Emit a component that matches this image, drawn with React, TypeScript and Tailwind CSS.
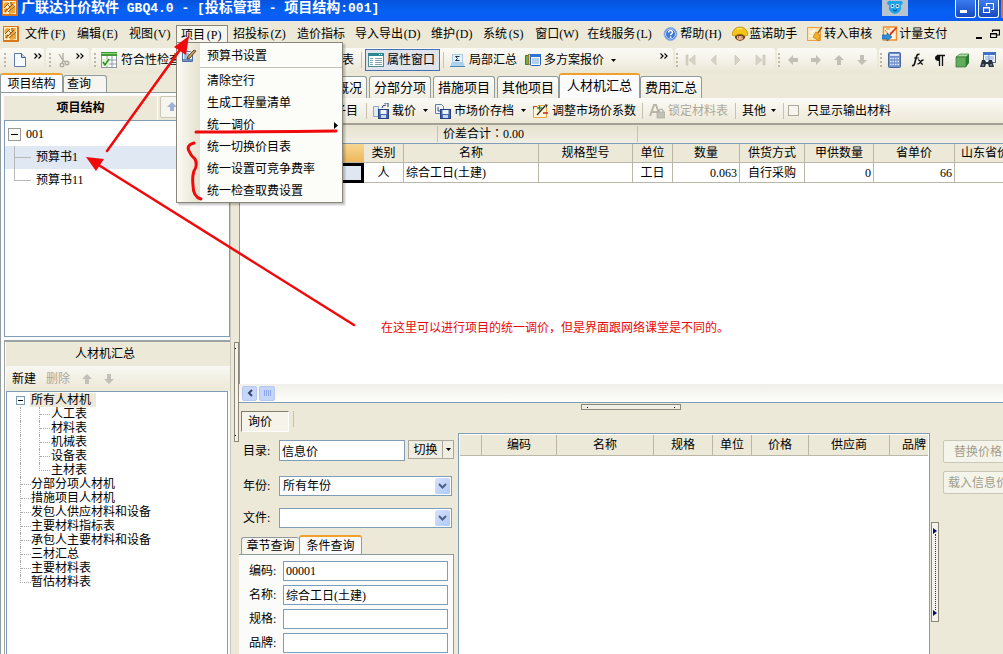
import React from "react";

type Kids = { children?: React.ReactNode };

function Key({ k }: { k: string }) {
  return <span className="inline-block w-[18px] text-center">({k})</span>;
}

function AppLogo() {
  return (
    <svg width="16" height="16" viewBox="0 0 16 16" className="shrink-0">
      <rect width="16" height="16" rx="1" fill="#d9771c" />
      <rect x="1" y="1" width="13" height="13" fill="#fff0c8" />
      <path d="M1.500 7Q1 2 5 2l2 1-4 4zM8 2h5l-1 4-4 4-2-2 3-3zM2 9l3-1 1 2-2 3-2-1zM7 11l6-5v7l-6 1z" fill="#f0a63c" />
      <path d="M2 8l5-5M5 10l6-6M6 5l2 2M6 12l7-6M3 12l2-3M9 2v3" stroke="#8a4a10" strokeWidth=".9" fill="none" />
    </svg>
  );
}

function HelpIcon() {
  return (
    <svg width="16" height="16" viewBox="0 0 16 16" className="shrink-0">
      <circle cx="7.500" cy="8" r="6.500" fill="#3f78d8" stroke="#9db7e6" />
      <circle cx="7.500" cy="8" r="5" fill="none" stroke="#e6effc" strokeWidth=".8" />
      <path d="M5.600 6.400c0-2.600 4-2.400 3.900-.1 0 1.400-1.900 1.500-1.900 3M7.600 10.600v1.300" fill="none" stroke="#fff" strokeWidth="1.500" />
    </svg>
  );
}

function HelmetIcon() {
  return (
    <svg width="16" height="16" viewBox="0 0 16 16" className="shrink-0">
      <path d="M3 8h10v4q-2 3-5 3t-5-3z" fill="#7a3f1d" />
      <path d="M5 10h6v3q-3 2-6 0z" fill="#e8b68a" />
      <path d="M0 9Q1 1 8 1t8 8l-3 1Q8 6 3 10z" fill="#f5c518" stroke="#b98508" strokeWidth=".7" />
      <path d="M5 3q3-1 5 0" stroke="#fff3a8" fill="none" />
      <path d="M6 11h1M9.500 11h1" stroke="#222" />
    </svg>
  );
}

function AuditIcon() {
  return (
    <svg width="16" height="16" viewBox="0 0 16 16" className="shrink-0">
      <rect x=".5" y="1.500" width="13" height="13" fill="#ffe3ae" stroke="#eda04a" />
      <path d="M3 5l2 2 3-4M2 10h4" stroke="#fff" strokeWidth="1.500" fill="none" />
      <path d="M15 1l-4 6" stroke="#9a5f16" strokeWidth="1.500" />
      <path d="M9 6l4 3-1 6-6-4z" fill="#f2b02a" stroke="#a8690c" strokeWidth=".6" />
    </svg>
  );
}

function PayIcon() {
  return (
    <svg width="16" height="16" viewBox="0 0 16 16" className="shrink-0">
      <rect x="1.500" y="1" width="13" height="13" fill="#fff3d9" stroke="#eb8f2e" strokeWidth="1.500" />
      <path d="M3 4l3 4M4 3h4" stroke="#e48324" />
      <path d="M15 2l-6 7-2 1 1-3 6-6z" fill="#d4301f" />
      <path d="M0 9h5V7l5 4-5 4v-2H0z" fill="#2f8fdb" stroke="#125a9c" strokeWidth=".6" />
    </svg>
  );
}

function Mascot() {
  return (
    <svg width="26" height="16" viewBox="0 0 26 16" className="shrink-0">
      <rect width="26" height="16" fill="#b9c3cf" />
      <path d="M5 3q1-3 4-2h8q3-1 4 2-1 2-2 2 1 8-6 9-7-1-6-9-2 0-2-2z" fill="#1fa3e8" />
      <ellipse cx="10.500" cy="6" rx="2" ry="2" fill="#eafaff" />
      <ellipse cx="15.500" cy="6" rx="2" ry="2" fill="#eafaff" />
      <circle cx="10.500" cy="6" r="1.100" fill="#0a3f78" />
      <circle cx="15.500" cy="6" r="1.100" fill="#0a3f78" />
      <path d="M11 10q2 2 4 0" stroke="#0a3f78" fill="none" />
    </svg>
  );
}

function DocIcon() {
  return (
    <svg width="12" height="16" viewBox="0 0 12 16" className="shrink-0">
      <path d="M.5 1.500h7l4 4v9H.5z" fill="#f7faff" stroke="#5d7ba6" />
      <path d="M7.500 1.500v4h4" fill="#c4d6f0" stroke="#3a5a8c" />
    </svg>
  );
}

function ScissorsIcon() {
  return (
    <svg width="13" height="16" viewBox="0 0 13 16" className="shrink-0" fill="none" stroke="#b1afa4" strokeWidth="1.400">
      <path d="M2 2l5 8M6 1l0 8" />
      <circle cx="5" cy="13" r="1.800" />
      <circle cx="10" cy="11" r="1.800" />
      <path d="M6 9l3 1M6 9l-1 2" />
    </svg>
  );
}

function CheckGridIcon() {
  return (
    <svg width="16" height="16" viewBox="0 0 16 16" className="shrink-0">
      <rect x=".5" y=".5" width="15" height="15" fill="#fff" stroke="#8d99a0" />
      <rect width="16" height="4" fill="#3f9a35" />
      <rect y="1" width="16" height="1" fill="#8ed07e" />
      <path d="M0 8h16M0 12h16M6 4v12M11 4v12" stroke="#8d99a0" />
      <rect x="1" y="7" width="7" height="7" fill="#dff2d4" />
      <path d="M2 10l2 3 4-6" stroke="#2d8c1f" strokeWidth="1.500" fill="none" />
    </svg>
  );
}

function PropsIcon() {
  return (
    <svg width="16" height="16" viewBox="0 0 16 16" className="shrink-0">
      <rect x=".5" y="1.500" width="15" height="13" fill="#fff" stroke="#4d8c97" />
      <rect y="1" width="16" height="3" fill="#2c8694" />
      <path d="M11 2.500h1M13 2.500h1" stroke="#fff" />
      <path d="M2 6.500h3M2 8.500h3M2 10.500h3M2 12.500h3M7 6.500h7M7 8.500h7M7 10.500h7M7 12.500h7" stroke="#86a6ad" />
    </svg>
  );
}

function SumIcon() {
  return (
    <svg width="15" height="15" viewBox="0 0 15 15" className="shrink-0">
      <rect x="2.500" y="1.500" width="10" height="8" fill="#e4f1fb" stroke="#a9cbe4" />
      <path d="M9.500 3.500h-4l2 2-2 2h4" fill="none" stroke="#1e2f4c" />
      <path d="M1 10h13v3H1z" fill="#a9d3ee" />
      <path d="M0 13.500h15" stroke="#4a88b8" />
    </svg>
  );
}

function PlanIcon() {
  return (
    <svg width="16" height="16" viewBox="0 0 16 16" className="shrink-0">
      <path d="M.5 3.500h4v9h-4z" fill="#6db04f" stroke="#3f7b2a" />
      <path d="M3.500 2.500h4v10h-4z" fill="#e8cf6a" stroke="#9a7d25" />
      <rect x="5.500" y="2.500" width="10" height="11" rx="1" fill="#f3f8ff" stroke="#2663b8" />
      <rect x="5" y="2" width="11" height="3" fill="#2e74cf" />
      <path d="M7 7h7M7 9h7M7 11h7" stroke="#79a4dc" />
    </svg>
  );
}

function DiskIcon({ swap }: { swap?: boolean }) {
  return (
    <svg width="16" height="16" viewBox="0 0 16 16" className="shrink-0">
      {swap ? (
        <>
          <path d="M.5 1.500h6l2 2v7h-8z" fill="#eef3fc" stroke="#5f7fb3" />
          <path d="M3 4v4h4M5 6l2 2-2 2" stroke="#24508f" fill="none" />
        </>
      ) : (
        <>
          <path d="M.5 3.500h5v10h-5z" fill="#e4ebf7" stroke="#8fa5c8" />
          <path d="M9 5q0-3 4-3M11 0h4v4" stroke="#1f3e78" fill="none" />
        </>
      )}
      <rect x="5.500" y="6.500" width="10" height="9" fill="#4567ad" stroke="#263f7d" />
      <rect x="7.500" y="7" width="6" height="4" fill="#eef3fc" />
      <rect x="8" y="12" width="5" height="3" fill="#c9d5ec" />
    </svg>
  );
}

function AdjustIcon() {
  return (
    <svg width="16" height="16" viewBox="0 0 16 16" className="shrink-0">
      <path d="M.5 3.500h4l1-1h8v12H.5z" fill="#fff6da" stroke="#e5a848" />
      <path d="M.5 6V3.500H4" stroke="#c23a1c" fill="none" />
      <path d="M4 12l8-9" stroke="#2a2a2a" strokeWidth="1.300" />
      <path d="M4 5h5M6.500 2.500v5" stroke="#2f8a3c" strokeWidth="1.300" />
      <path d="M10 10h5" stroke="#c2261c" strokeWidth="1.500" />
      <path d="M12 1l3 1-2 3z" fill="#3d3d3d" />
    </svg>
  );
}

function LockIcon() {
  return (
    <svg width="16" height="16" viewBox="0 0 16 16" className="shrink-0">
      <path d="M1 13L5 2h2l4 11M3 9h6" fill="none" stroke="#b7b5a6" strokeWidth="2" />
      <rect x="8" y="9" width="8" height="6" fill="#c4c2b4" stroke="#a5a394" strokeWidth=".6" />
      <path d="M10 9V7q2-2 4 0v2" fill="none" stroke="#a5a394" />
    </svg>
  );
}

function EditIcon() {
  return (
    <svg width="16" height="16" viewBox="0 0 16 16" className="shrink-0">
      <path d="M1.500 3.500h8l2 2v8h-10z" fill="#eef4fc" stroke="#4c6ea4" />
      <path d="M3 6h5M3 8h4M3 10h6" stroke="#5b8bb8" />
      <rect x="2" y="11" width="9" height="2" fill="#6b8dc0" />
      <path d="M6 11l1-3 6-6 2 1-6 7z" fill="#c49a55" stroke="#4f3312" strokeWidth=".8" />
    </svg>
  );
}

function CalcIcon() {
  return (
    <svg width="13" height="16" viewBox="0 0 13 16" className="shrink-0">
      <rect x=".5" y=".5" width="12" height="15" rx="1" fill="#6f90cc" stroke="#4a66a3" />
      <rect x="2" y="2" width="9" height="2" fill="#d7e4f8" />
      <path d="M2 6.500h9M2 9.500h9M2 12.500h9" stroke="#eaf1fc" strokeWidth="1.500" strokeDasharray="1.500 1" />
    </svg>
  );
}

function FxIcon() {
  return (
    <svg width="13" height="14" viewBox="0 0 13 14" className="shrink-0" fill="none" stroke="#111">
      <path d="M8.500 1.500q-2-1-3 2L3.500 11q-.5 2-2.500 1.500" strokeWidth="1.600" />
      <path d="M3 5h5" />
      <path d="M7 7q1.500-.5 2.500 2t2.500 2M12.500 7q-2 0-3 2t-3 2" strokeWidth="1.300" />
    </svg>
  );
}

function PilcrowIcon() {
  return (
    <svg width="11" height="13" viewBox="0 0 11 13" className="shrink-0">
      <path d="M5 1v6Q1 7 1 4t4-3z" fill="#111" />
      <path d="M3 1.500h8M5.500 1v11M8.500 1v11" stroke="#111" strokeWidth="1.300" />
    </svg>
  );
}

function CubeIcon() {
  return (
    <svg width="15" height="15" viewBox="0 0 15 15" className="shrink-0">
      <path d="M1 4l4-3h9l-3 3z" fill="#a9dba2" stroke="#3f7f3d" strokeWidth=".7" />
      <path d="M1 4h10v10H1z" fill="#62ad5d" stroke="#2f6e2e" strokeWidth=".7" />
      <path d="M11 4l3-3v9l-3 4z" fill="#2f7a33" />
    </svg>
  );
}

function FindIcon() {
  return (
    <svg width="16" height="16" viewBox="0 0 16 16" className="shrink-0">
      <rect x="3.500" y=".5" width="12" height="10" fill="#eef5ff" stroke="#3f6cb0" />
      <rect x="3" width="13" height="3" fill="#3f73c4" />
      <path d="M5 5h9M5 7h9M9 3v6" stroke="#86a8d8" />
      <path d="M2 8h3l1 2h2l1-2h3l2 7H9l-1-3H6l-1 3H0z" fill="#2b3340" />
      <path d="M2 13h2M10 13h2" stroke="#9fb4d2" />
    </svg>
  );
}

function NavIcon({ d }: { d: string }) {
  return (
    <svg width="12" height="12" viewBox="0 0 12 12" className="shrink-0">
      <path d={d} fill="#d6d3c6" stroke="#c6c3b4" strokeWidth=".6" />
    </svg>
  );
}

function Arrow({ turn }: { turn: number }) {
  return (
    <svg width="12" height="12" viewBox="0 0 12 12" className="shrink-0">
      <path d="M1 6l5-5v3h5v4H6v3z" fill="#c2c0b6" transform={`rotate(${turn} 6 6)`} />
    </svg>
  );
}

function Caret() {
  return (
    <svg width="5" height="3" viewBox="0 0 5 3" className="shrink-0">
      <path d="M0 0h5L2.500 3z" fill="#000" />
    </svg>
  );
}

function Chevrons() {
  return (
    <svg width="8" height="6" viewBox="0 0 8 6" className="mb-[8px] shrink-0" fill="none" stroke="#000" strokeWidth="1.200">
      <path d="M.5.500L3 3 .5 5.500M4.500.500L7 3 4.500 5.500" />
    </svg>
  );
}

function Grip() {
  return (
    <span className="flex w-[2px] shrink-0 flex-col gap-[2px]">
      {[0, 1, 2, 3].map((i) => (
        <span key={i} className="h-[2px] w-[2px] bg-[#bdb9a5]" />
      ))}
    </span>
  );
}

function Sep() {
  return <span className="h-[16px] w-px shrink-0 bg-[#c5c2b0]" />;
}

function Band({ className, children }: Kids & { className: string }) {
  return (
    <div className={`flex h-[25px] shrink-0 items-center rounded-[3px] bg-linear-to-b from-[#fbfaf6] via-[#f4f2e8] to-[#e9e6d5] ${className}`}>
      {children}
    </div>
  );
}

const plainMenus: [string, string?][] = [
  ["招投标", "Z"],
  ["造价指标"],
  ["导入导出", "D"],
  ["维护", "D"],
  ["系统", "S"],
  ["窗口", "W"],
  ["在线服务", "L"],
];

function MenuButton({ label, k, children }: Kids & { label: string; k?: string }) {
  return (
    <button className="flex h-[22px] shrink-0 items-center gap-px px-[5px] whitespace-nowrap">
      {children}
      <span>
        {label}
        {k && <Key k={k} />}
      </span>
    </button>
  );
}

function PopupItem({ label, more }: { label: string; more?: boolean }) {
  return (
    <button role="menuitem" className="flex h-[22px] w-full items-center pr-1 pl-[7px] text-left">
      <span className="flex-1">{label}</span>
      {more && (
        <svg width="4" height="7" viewBox="0 0 4 7">
          <path d="M0 0l4 3.500L0 7z" />
        </svg>
      )}
    </button>
  );
}

function ProjectMenu() {
  return (
    <div role="menu" className="absolute top-[17px] left-0 z-20 flex w-[167px] border border-[#8a867a] bg-[#fcfcf9] shadow-[2px_2px_2px_rgba(0,0,0,0.25)]">
      <div className="w-[23px] shrink-0 bg-linear-to-r from-[#fbfaf4] to-[#e6e2d0] pt-[5px] pl-[4px]">
        <EditIcon />
      </div>
      <div className="flex-1">
        <div className="border-b border-[#c5c2b8] pt-[2px]">
          <PopupItem label="预算书设置" />
        </div>
        <div className="pt-[2px]">
          <PopupItem label="清除空行" />
          <PopupItem label="生成工程量清单" />
          <PopupItem label="统一调价" more />
          <PopupItem label="统一切换价目表" />
          <PopupItem label="统一设置可竞争费率" />
          <PopupItem label="统一检查取费设置" />
        </div>
      </div>
    </div>
  );
}

function TitleBar() {
  return (
    <header className="flex h-[21px] shrink-0 items-start overflow-hidden bg-linear-to-b from-[#0553dd] via-[#0560f2] to-[#0a5cf5] pl-[2px]">
      <AppLogo />
      <h1 className="ml-[3px] text-[14px] leading-[16px] font-bold whitespace-pre text-white">
        广联达计价软件<span className="font-['Liberation_Mono'] text-[13px]"> GBQ4.0 - [</span>投标管理
        <span className="font-['Liberation_Mono'] text-[13px]"> - </span>项目结构
        <span className="font-['Liberation_Mono'] text-[13px]">:001]</span>
      </h1>
      <div className="ml-auto flex shrink-0">
        <Mascot />
        <button aria-label="最小化" className="ml-[47px] flex h-[18px] w-[21px] items-end rounded-b-[3px] border border-t-0 border-white bg-linear-to-b from-[#3c7cf0] to-[#1747c0] pb-[4px] pl-[4px]">
          <span className="h-[3px] w-[7px] bg-white" />
        </button>
        <button aria-label="还原" className="ml-[2px] flex h-[18px] w-[21px] items-center justify-center rounded-b-[3px] border border-t-0 border-white bg-linear-to-b from-[#3c7cf0] to-[#1747c0]">
          <svg width="11" height="11" viewBox="0 0 11 11" fill="none" stroke="#fff">
            <path d="M3.500 3V.500h7v6H8" strokeWidth="1.200" />
            <path d="M.5 4.500h6v5h-6zM.5 5h6" strokeWidth="1.200" />
          </svg>
        </button>
        <button aria-label="关闭" className="ml-[2px] h-[18px] w-[2px] bg-[#e0694f]" />
      </div>
    </header>
  );
}

function MenuBar() {
  return (
    <nav className="flex h-[26px] shrink-0 items-center bg-[#ece9d8] pl-[3px]">
      <AppLogo />
      <div className="flex w-px shrink-0" />
      <MenuButton label="文件" k="F" />
      <MenuButton label="编辑" k="E" />
      <MenuButton label="视图" k="V" />
      <div className="relative shrink-0">
        <button className="flex h-[18px] w-[52px] items-center border border-b-0 border-[#8a867a] bg-[#f6f5ee] px-1 whitespace-nowrap">
          <span>
            项目
            <Key k="P" />
          </span>
        </button>
        <ProjectMenu />
      </div>
      {plainMenus.map(([label, k]) => (
        <MenuButton key={label} label={label} k={k} />
      ))}
      <MenuButton label="帮助" k="H">
        <HelpIcon />
      </MenuButton>
      <MenuButton label="蓝诺助手">
        <HelmetIcon />
      </MenuButton>
      <MenuButton label="转入审核">
        <AuditIcon />
      </MenuButton>
      <MenuButton label="计量支付">
        <PayIcon />
      </MenuButton>
      <div className="ml-auto flex h-[10px] shrink-0 items-end gap-[8px] pr-[3px]">
        <span className="h-[2px] w-[6px] bg-black" />
        <svg width="10" height="10" viewBox="0 0 10 10" fill="none" stroke="#000">
          <path d="M2.500 3V1h7v5H7M2.500 1.500h7" strokeWidth="1.200" />
          <path d="M.5 4.500h6v4h-6zM.5 5h6" strokeWidth="1.200" />
        </svg>
      </div>
    </nav>
  );
}

function Toolbar() {
  return (
    <div className="flex h-[26px] shrink-0 items-center gap-[2px] overflow-hidden bg-[#ece9d8] whitespace-nowrap">
      <Band className="w-[44px] gap-[8px] pl-[4px]">
        <Grip />
        <DocIcon />
        <Chevrons />
      </Band>
      <Band className="w-[43px] gap-[6px] pl-[3px]">
        <Grip />
        <ScissorsIcon />
        <Chevrons />
      </Band>
      <Band className="min-w-[580px] flex-1 pl-[3px]">
        <Grip />
        <button className="ml-[5px] flex w-[229px] shrink-0 items-center gap-1">
          <CheckGridIcon />
          符合性检查
        </button>
        <button className="mr-[7px] shrink-0">报表</button>
        <Sep />
        <button className="mx-[3px] flex h-[22px] w-[75px] shrink-0 items-center gap-[3px] border border-[#4a6fb5] bg-[#dfe3ea] pl-[2px]">
          <PropsIcon />
          属性窗口
        </button>
        <Sep />
        <button className="ml-[6px] flex shrink-0 items-center gap-1">
          <SumIcon />
          局部汇总
        </button>
        <button className="ml-[8px] flex shrink-0 items-center gap-[3px]">
          <PlanIcon />
          多方案报价
          <span className="ml-[4px]">
            <Caret />
          </span>
        </button>
        <span className="mr-[5px] ml-auto">
          <Chevrons />
        </span>
      </Band>
      <Band className="w-[100px] gap-[7px] pl-px">
        <Grip />
        <div className="flex gap-[11px]">
          <NavIcon d="M1 1h2v10H1zM10 1v10L4 6z" />
          <NavIcon d="M8 1v10L3 6z" />
          <NavIcon d="M4 1v10l5-5z" />
          <NavIcon d="M9 1h2v10H9zM2 1v10l6-5z" />
        </div>
      </Band>
      <Band className="w-[100px] gap-[7px] pl-px">
        <Grip />
        <div className="flex gap-[11px]">
          <Arrow turn={0} />
          <Arrow turn={180} />
          <Arrow turn={90} />
          <Arrow turn={270} />
        </div>
      </Band>
      <Band className="w-[124px] gap-[6px] pl-px">
        <Grip />
        <div className="flex items-center gap-[10px]">
          <CalcIcon />
          <FxIcon />
          <PilcrowIcon />
          <CubeIcon />
          <FindIcon />
        </div>
      </Band>
    </div>
  );
}

const groups = [
  "分部分项人材机",
  "措施项目人材机",
  "发包人供应材料和设备",
  "主要材料指标表",
  "承包人主要材料和设备",
  "三材汇总",
  "主要材料表",
  "暂估材料表",
];
const tables = ["人工表", "材料表", "机械表", "设备表", "主材表"];

function Branch({ last }: { last?: boolean }) {
  return (
    <span className={last ? "h-[14px] w-[11px] shrink-0" : "h-[14px] w-[11px] shrink-0 border-l border-dotted border-[#a8a8a8]"}>
      <span className={last ? "block h-[8px] border-b border-l border-dotted border-[#a8a8a8]" : "block h-[8px] border-b border-dotted border-[#a8a8a8]"} />
    </span>
  );
}

function Sidebar() {
  return (
    <aside className="flex w-[230px] shrink-0 flex-col">
      <div role="tablist" className="flex h-[19px] shrink-0 items-end">
        <button role="tab" className="h-[19px] w-[63px] rounded-t-[3px] border-x border-t-2 border-x-[#919b9c] border-t-[#f0a12c] bg-[#fcfcfe] text-center">项目结构</button>
        <button role="tab" className="h-[17px] w-[44px] rounded-t-[3px] border border-b-0 border-[#919b9c] bg-[#f6f5ef] pr-[12px] text-center leading-[16px]">查询</button>
      </div>
      <div className="flex min-h-0 flex-1 flex-col border-t border-l border-[#919b9c] bg-[#fcfcfe] pt-[3px] pl-[3px]">
        <div className="flex h-[24px] shrink-0 bg-[#ece9d8]">
          <h2 className="w-[154px] border-r border-white text-center text-[12px] leading-[24px] font-bold">项目结构</h2>
          <button aria-label="上移" className="ml-[2px] flex h-[22px] w-[24px] items-center justify-center rounded-[2px] border border-[#c9c7ba] bg-[#f6f5ef]">
            <svg width="10" height="10" viewBox="0 0 10 10">
              <path d="M5 0l5 5H7v4H3V5H0z" fill="#9db1d4" />
            </svg>
          </button>
        </div>
        <ul className="h-[217px] shrink-0 border border-[#7f9db9] bg-white pt-[2px] leading-[23px]">
          <li>
            <div className="flex h-[23px] items-center gap-[5px] pl-[3px]">
              <span className="flex h-[13px] w-[13px] items-center justify-center border border-[#9a9a90] bg-[#fafaf7]">
                <span className="h-px w-[7px] bg-black" />
              </span>
              001
            </div>
            <ul>
              <li className="flex h-[23px] bg-[#e0e8f4] pl-[9px]">
                <span className="mr-[5px] w-[17px] border-l border-[#b8b8b8]">
                  <span className="block h-[12px] border-b border-[#b8b8b8]" />
                </span>
                预算书1
              </li>
              <li className="flex h-[23px] pl-[9px]">
                <span className="mr-[5px] w-[17px]">
                  <span className="block h-[12px] border-b border-l border-[#b8b8b8]" />
                </span>
                预算书11
              </li>
            </ul>
          </li>
        </ul>
        <section className="mt-[3px] flex min-h-0 flex-1 flex-col border-t-2 border-l border-[#9ba4a5] pl-px">
          <h2 className="h-[24px] shrink-0 bg-[#ece9d8] pr-[26px] text-center leading-[24px]">人材机汇总</h2>
          <div className="flex h-[25px] shrink-0 items-center bg-linear-to-b from-[#f8f7f1] to-[#ece9d8] pl-[6px]">
            <button>新建</button>
            <button className="ml-[10px] text-[#aca899]" disabled>删除</button>
            <span className="ml-[11px]"><Arrow turn={90} /></span>
            <span className="ml-[10px]"><Arrow turn={270} /></span>
          </div>
          <ul className="mr-[2px] min-h-0 flex-1 border border-b-0 border-[#7f9db9] bg-white pt-px leading-[14px]">
            <li className="flex h-[14px] items-center pl-[9px]">
              <span className="mr-[5px] flex h-[9px] w-[9px] items-center justify-center border border-[#7b9ab5] bg-white">
                <span className="h-px w-[5px] bg-black" />
              </span>
              <span className="w-[66px] bg-[#ece9d8] pl-px">所有人材机</span>
            </li>
            {tables.map((t, i) => (
              <li key={t} className="flex pl-[13px]">
                <span className="w-[19px] border-l border-dotted border-[#a8a8a8]" />
                <Branch last={i === tables.length - 1} />
                <span className="pl-px">{t}</span>
              </li>
            ))}
            {groups.map((t, i) => (
              <li key={t} className="flex pl-[13px]">
                <Branch last={i === groups.length - 1} />
                {t}
              </li>
            ))}
          </ul>
        </section>
      </div>
    </aside>
  );
}

function Tab({ label, active }: { label: string; active?: boolean }) {
  return active ? (
    <button role="tab" aria-selected className="-ml-[2px] h-[25px] w-[81px] shrink-0 rounded-t-[3px] border-x border-t-2 border-x-[#919b9c] border-t-[#f0a12c] bg-[#fcfcfe] pb-[1px] text-center text-[13px]">{label}</button>
  ) : (
    <button role="tab" className="h-[22px] w-[62px] shrink-0 rounded-t-[3px] border border-b-0 border-[#919b9c] bg-linear-to-b from-[#fdfdfb] to-[#f0eee3] text-center text-[13px] leading-[21px]">{label}</button>
  );
}

const cell = "h-[19px] overflow-hidden border-r border-b border-[#b9b7a8] px-[2px] whitespace-nowrap";

function MaterialsTable() {
  const heads = ["类别", "名称", "规格型号", "单位", "数量", "供货方式", "甲供数量", "省单价"];
  return (
    <table className="w-[800px] table-fixed border-separate border-spacing-0">
      <colgroup>
        <col className="w-[124px]" />
        <col className="w-[40px]" />
        <col className="w-[135px]" />
        <col className="w-[94px]" />
        <col className="w-[40px]" />
        <col className="w-[67px]" />
        <col className="w-[65px]" />
        <col className="w-[69px]" />
        <col className="w-[81px]" />
        <col className="w-[85px]" />
      </colgroup>
      <thead>
        <tr className="bg-[#ece9d8]">
          <th className="h-[19px] border-b border-[#b9b7a8] bg-linear-to-b from-[#f6d690] to-[#eeb75a] font-normal">编码</th>
          {heads.map((h) => (
            <th key={h} className={`${cell} text-center font-normal`}>{h}</th>
          ))}
          <th className={`${cell} pl-[6px] text-left font-normal`}>山东省价</th>
        </tr>
      </thead>
      <tbody>
        <tr>
          <td className="h-[20px] border-3 border-black bg-[#dfe7f3]" />
          <td className={`${cell} text-center`}>人</td>
          <td className={cell}>综合工日(土建)</td>
          <td className={cell} />
          <td className={`${cell} text-center`}>工日</td>
          <td className={`${cell} text-right`}>0.063</td>
          <td className={`${cell} text-center`}>自行采购</td>
          <td className={`${cell} text-right`}>0</td>
          <td className={`${cell} text-right`}>66</td>
          <td className={cell} />
        </tr>
      </tbody>
    </table>
  );
}

function DropSelect({ id, value }: { id: string; value: string }) {
  return (
    <span className="relative flex h-[20px] w-[173px]">
      <select id={id} className="h-full w-full appearance-none border border-[#7f9db9] bg-white pl-[3px] leading-[18px]">
        <option>{value}</option>
      </select>
      <span className="pointer-events-none absolute top-[2px] right-[2px] flex h-[16px] w-[15px] items-center justify-center rounded-[2px] bg-linear-to-br from-[#d5e2fd] to-[#b0c8f5]">
        <svg width="9" height="6" viewBox="0 0 9 6">
          <path d="M1 1l3.500 3.500L8 1" fill="none" stroke="#4d6185" strokeWidth="2" />
        </svg>
      </span>
    </span>
  );
}

function Field({ id, label, value }: { id: string; label: string; value?: string }) {
  return (
    <div className="flex h-[20px] items-center">
      <label htmlFor={id} className="w-[34px] shrink-0">{label}:</label>
      <input id={id} defaultValue={value} className="h-[20px] min-w-0 flex-1 border border-[#7f9db9] bg-white pl-[2px]" />
    </div>
  );
}

function QueryForm() {
  return (
    <div className="flex w-[215px] shrink-0 flex-col">
      <div className="mt-[8px] flex shrink-0 gap-[4px] pl-[2px]">
        <button className="h-[21px] w-[48px] border border-[#fff] border-t-[#807d70] border-l-[#807d70] bg-[#f5f3ea] pl-[6px] text-left">询价</button>
        <Sep />
      </div>
      <div className="mt-[8px] flex items-center pl-[4px]">
        <label htmlFor="catalog" className="w-[36px]">目录:</label>
        <input id="catalog" defaultValue="信息价" className="h-[21px] w-[126px] border border-[#7f9db9] bg-white pl-[2px]" />
        <button className="mb-[2px] ml-[3px] h-[19px] w-[35px] border border-[#aca899] bg-[#f0eee2]">切换</button>
        <button aria-label="更多" className="mb-[2px] flex h-[19px] w-[11px] items-center justify-center border border-l-0 border-[#aca899] bg-[#f0eee2]"><Caret /></button>
      </div>
      <div className="mt-[15px] flex items-center pl-[4px]">
        <label htmlFor="year" className="w-[36px]">年份:</label>
        <DropSelect id="year" value="所有年份" />
      </div>
      <div className="mt-[12px] flex items-center pl-[4px]">
        <label htmlFor="file" className="w-[36px]">文件:</label>
        <DropSelect id="file" value="" />
      </div>
      <div role="tablist" className="mt-[7px] flex h-[19px] shrink-0 items-end pl-[2px]">
        <button role="tab" className="h-[17px] w-[58px] rounded-t-[3px] border border-r-0 border-b-0 border-[#919b9c] bg-[#f6f5ef] text-center leading-[16px]">章节查询</button>
        <button role="tab" aria-selected className="h-[19px] w-[63px] rounded-t-[3px] border-x border-t-2 border-x-[#919b9c] border-t-[#f0a12c] bg-[#fcfcfe] text-center">条件查询</button>
      </div>
      <div className="flex min-h-0 flex-1 flex-col gap-[4px] overflow-hidden border-t border-r border-[#919b9c] bg-[#fbfbf9] pt-[6px] pr-[5px] pl-[10px]">
        <Field id="code" label="编码" value="00001" />
        <Field id="name" label="名称" value="综合工日(土建)" />
        <Field id="spec" label="规格" />
        <Field id="brand" label="品牌" />
      </div>
    </div>
  );
}

function PriceTable() {
  return (
    <div className="mt-[30px] ml-[4px] min-w-0 flex-1 overflow-hidden border border-b-0 border-[#7f9db9] bg-white p-px pb-0">
      <table className="w-full table-fixed border-separate border-spacing-0">
        <colgroup>
          <col className="w-[22px]" />
          <col className="w-[75px]" />
          <col className="w-[97px]" />
          <col className="w-[59px]" />
          <col className="w-[39px]" />
          <col className="w-[57px]" />
          <col className="w-[81px]" />
          <col />
        </colgroup>
        <thead>
          <tr className="bg-[#ece9d8]">
            {["", "编码", "名称", "规格", "单位", "价格", "供应商"].map((h) => (
              <th key={h} className="h-[21px] border-r border-b border-[#b9b7a8] font-normal">{h}</th>
            ))}
            <th className="h-[21px] border-b border-[#b9b7a8] pr-[2px] text-right font-normal whitespace-nowrap">品牌</th>
          </tr>
        </thead>
      </table>
    </div>
  );
}

function MainArea() {
  return (
    <main className="flex min-w-0 flex-1 flex-col">
      <div role="tablist" className="flex h-[25px] shrink-0 items-end gap-[2px] overflow-hidden pl-[66px]">
        <Tab label="工程概况" />
        <Tab label="分部分项" />
        <Tab label="措施项目" />
        <Tab label="其他项目" />
        <Tab label="人材机汇总" active />
        <div className="-ml-[2px] flex">
          <Tab label="费用汇总" />
        </div>
      </div>
      <div className="flex h-[27px] shrink-0 items-center overflow-hidden border-b-2 border-[#a3a194] bg-linear-to-b from-[#fbfaf6] to-[#ece9d8] pl-[94px] whitespace-nowrap">
        <button className="mr-[8px] ml-[1px] shrink-0">子目</button>
        <Sep />
        <button className="ml-[6px] flex shrink-0 items-center gap-[3px]">
          <DiskIcon />
          载价
          <span className="ml-[4px]"><Caret /></span>
        </button>
        <button className="ml-[7px] flex shrink-0 items-center gap-[3px]">
          <DiskIcon swap />
          市场价存档
          <span className="ml-[4px]"><Caret /></span>
        </button>
        <button className="mr-[6px] ml-[7px] flex shrink-0 items-center gap-[3px]">
          <AdjustIcon />
          调整市场价系数
        </button>
        <Sep />
        <button disabled className="mr-[7px] ml-[6px] flex shrink-0 items-center gap-[3px] text-[#aca899]">
          <LockIcon />
          锁定材料表
        </button>
        <Sep />
        <button className="mr-[7px] ml-[6px] flex shrink-0 items-center gap-[5px]">
          其他
          <Caret />
        </button>
        <Sep />
        <label className="ml-[4px] flex shrink-0 items-center gap-[8px]">
          <input type="checkbox" className="h-[11px] w-[11px] appearance-none border border-[#aca899] bg-[#f6f5ef]" />
          只显示输出材料
        </label>
      </div>
      <div className="flex h-[18px] shrink-0 items-center bg-linear-to-b from-[#e6e2d0] to-[#f1efe4] pl-[198px]">
        <Sep />
        <span className="w-[199px] shrink-0 pl-[5px]">
          价差合计<span className="font-['Noto_Sans_CJK_TC'] leading-none">：</span>0.00
        </span>
        <Sep />
      </div>
      <div className="min-h-0 flex-1 overflow-hidden border-t border-l border-[#7f9db9] bg-white">
        <MaterialsTable />
      </div>
      <div className="flex h-[19px] shrink-0 items-center gap-[2px] border-b border-[#7f9db9] bg-linear-to-b from-[#f0efe9] to-[#fefefb] pl-[3px]">
        <button aria-label="向左滚动" className="flex h-[15px] w-[15px] items-center justify-center rounded-[2px] border border-[#b4c8f0] bg-[#c6d6fb]">
          <svg width="6" height="8" viewBox="0 0 6 8">
            <path d="M5 1L2 4l3 3" fill="none" stroke="#34496e" strokeWidth="2" />
          </svg>
        </button>
        <span className="flex h-[15px] w-[16px] items-center justify-center gap-px rounded-[2px] border border-[#b4c8f0] bg-[#c6d6fb]">
          {[0, 1, 2, 3].map((i) => (
            <span key={i} className="h-[6px] w-px bg-[#8aa6e6]" />
          ))}
        </span>
      </div>
      <div className="relative flex h-[251px] shrink-0">
        <div className="absolute top-[1px] left-[342px] flex h-[6px] w-[100px] items-center justify-between border border-[#8b8878] bg-[#f1efe5] px-[5px]">
          <span className="h-px w-px bg-black" />
          <span className="h-px w-px bg-black" />
        </div>
        <QueryForm />
        <PriceTable />
        <div className="flex w-[73px] shrink-0 overflow-hidden">
          <div className="mt-[119px] ml-px flex h-[100px] w-[8px] shrink-0 flex-col items-center justify-between border border-[#8b8878] bg-[#f4f2ea] py-[5px]">
            <svg width="4" height="6" viewBox="0 0 4 6"><path d="M0 0l4 3-4 3z" fill="#0a0a6e" /></svg>
            <span className="w-px flex-1 border-l border-dotted border-[#333]" />
            <svg width="4" height="6" viewBox="0 0 4 6"><path d="M0 0l4 3-4 3z" fill="#0a0a6e" /></svg>
          </div>
          <div className="mt-[37px] ml-[4px] flex flex-col gap-[8px] whitespace-nowrap text-[#a19d8c]">
            <button disabled className="h-[23px] w-[84px] rounded-[2px] border border-[#c9c7ba] bg-[#f5f4ea] pl-[10px] text-left">替换价格</button>
            <button disabled className="h-[23px] w-[84px] rounded-[2px] border border-[#c9c7ba] bg-[#f5f4ea] pl-[4px] text-left">载入信息价</button>
          </div>
        </div>
      </div>
    </main>
  );
}

function Annotations() {
  return (
    <>
      <svg width="400" height="340" viewBox="0 0 400 340" className="pointer-events-none absolute top-0 left-0 z-30" fill="none" stroke="#f00a0c" strokeLinecap="round">
        <path d="M107 151L182 47" strokeWidth="2.500" />
        <path d="M189 36l-3 19-12-8z" fill="#f00a0c" stroke="none" />
        <path d="M354 325L97 164" strokeWidth="2.500" />
        <path d="M86 157l18 2-8 12z" fill="#f00a0c" stroke="none" />
        <path d="M196 132q70 0 140-1" strokeWidth="3" />
        <path d="M194 143q-8 2-5 8 2 5 6 8 3 6-1 12-2 6-1 14 0 12 8 14" strokeWidth="3" />
      </svg>
      <p className="pointer-events-none absolute top-[319px] left-[381px] z-30 leading-[18px] whitespace-nowrap text-[#e80808]">
        在这里可以进行项目的统一调价，但是界面跟网络课堂是不同的。
      </p>
    </>
  );
}

export default function App() {
  return (
    <div className="relative flex h-screen flex-col overflow-hidden bg-[#ece9d8] font-['Liberation_Serif','Noto_Sans_CJK_SC',sans-serif] text-[12px] leading-[16px] text-black">
      <TitleBar />
      <MenuBar />
      <Toolbar />
      <div className="flex min-h-0 flex-1">
        <Sidebar />
        <div className="flex w-[9px] shrink-0 flex-col border-l border-[#c9c7ba] pt-[269px] pl-[3px]">
          <div className="flex h-[100px] w-[5px] flex-col justify-between border border-[#8b8878] bg-[#f4f2ea] py-[5px]">
            <span className="h-px w-px bg-black" />
            <span className="h-px w-px bg-black" />
          </div>
        </div>
        <MainArea />
      </div>
      <Annotations />
    </div>
  );
}
